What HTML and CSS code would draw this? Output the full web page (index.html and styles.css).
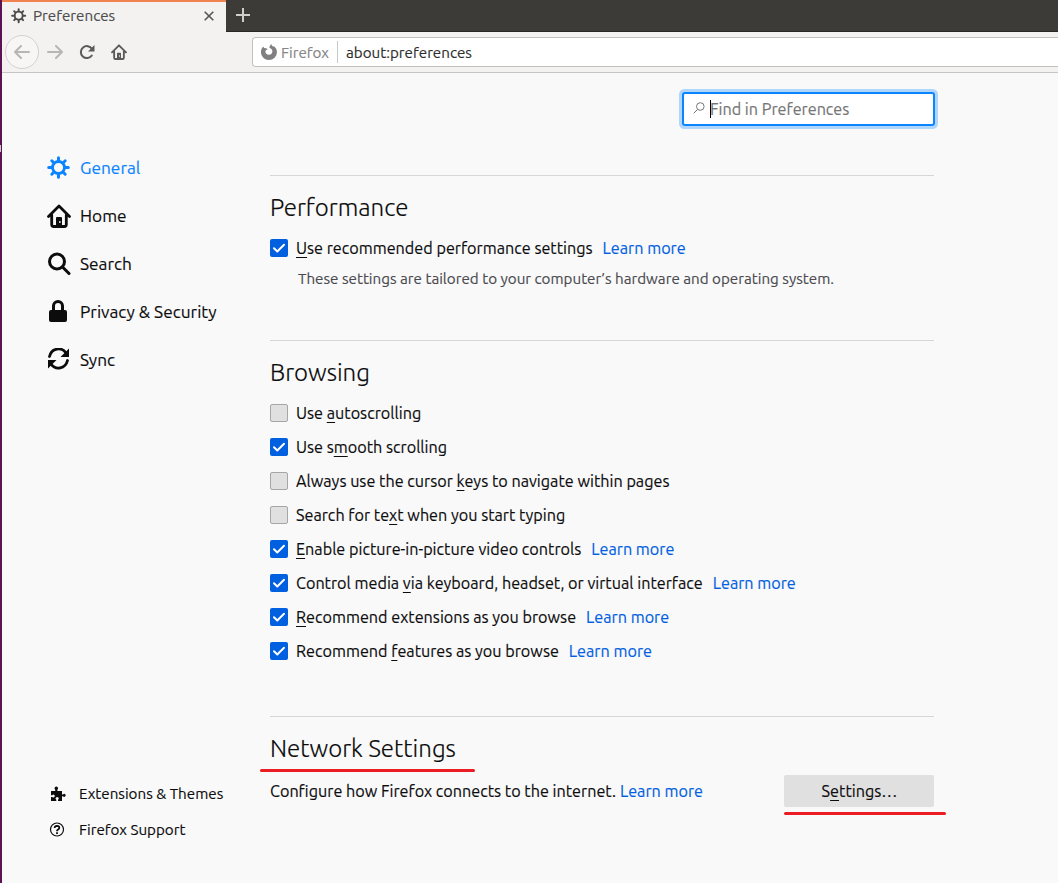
FILE: index.html
```html
<!DOCTYPE html>
<html lang="en">
<head>
<meta charset="utf-8">
<title>Preferences</title>
<link rel="stylesheet" href="styles.css">
</head>
<body>
<svg class="defs" width="0" height="0">
  <symbol id="gear" viewBox="0 0 24 24"><g fill="none" stroke="currentColor" stroke-linecap="round"><circle cx="11.500" cy="11.500" r="6" stroke-width="2.800"/><path stroke-width="3" d="M11.500 5V1.700M11.500 18v3.300M5 11.500H1.700M18 11.500h3.300M6.500 6.500 4.800 4.800M16.500 6.500l1.700-1.700M6.500 16.500l-1.700 1.700M16.500 16.500l1.700 1.700"/></g></symbol>
  <symbol id="home" viewBox="0 0 24 24"><path fill="none" stroke="currentColor" stroke-width="2.8" stroke-linecap="round" stroke-linejoin="round" d="M1.500 12.500 12 2l10.500 10.500M4.700 11v9.500a2 2 0 0 0 2 2h10.600a2 2 0 0 0 2-2V11"/><path fill="currentColor" fill-rule="evenodd" d="M9 22v-8q0-1 1-1h4q1 0 1 1v8zM12.200 17v2h1.300v-2z"/></symbol>
  <symbol id="check" viewBox="0 0 18 18"><path fill="none" stroke="#fff" stroke-width="2" stroke-linecap="round" stroke-linejoin="round" d="m4 9.300 3.300 3.200L14 5.800"/></symbol>
</svg>
<div class="window">
  <header class="tabs">
    <div class="tab">
      <svg class="tab-gear"><use href="#gear"/></svg>
      <span class="tab-title">Preferences</span>
      <svg class="tab-close" viewBox="0 0 10 10"><path d="m.7.7 8.600 8.600M9.300.7.7 9.300"/></svg>
    </div>
    <svg class="new-tab" viewBox="0 0 14 14"><path d="M7 0v14M0 7h14"/></svg>
  </header>
  <nav class="toolbar">
    <span class="back"><svg class="arrow" viewBox="0 0 16 14"><path d="M15 7H1M7 1 1 7l6 6"/></svg></span>
    <svg class="arrow forward" viewBox="0 0 16 14"><path d="M1 7h14M9 1l6 6-6 6"/></svg>
    <svg class="reload" viewBox="0 0 16 16"><path fill="none" stroke="currentColor" stroke-width="2" stroke-linecap="round" d="M12.800 11.500A6 6 0 1 1 13 5"/><path fill="currentColor" d="M15.500 1v6.500H9z"/></svg>
    <svg class="toolbar-home"><use href="#home"/></svg>
    <div class="urlbar">
      <svg class="firefox" viewBox="0 0 16 16"><path d="M8 16A8 8 0 0 1 1.200 3.800L2.400 2.400l.6 1.600 2.200.2 1.500 1.100-1.800.9q-1 1.600.1 3.200 1.300 1.700 3.500 1.400 2.500-.5 2.900-3.100.1-1.600-1.200-2.900L8.600 4.100Q8 2.400 10.200 0q.3 1.700 2 2.800l.7-.9q3.100 2.500 3.100 6.200A8 8 0 0 1 8 16z"/></svg>
      <span class="identity">Firefox</span>
      <span class="url">about:preferences</span>
    </div>
  </nav>
  <div class="page">
    <aside class="sidebar">
      <ul class="categories">
        <li class="category selected"><svg class="icon"><use href="#gear"/></svg><span>General</span></li>
        <li class="category"><svg class="icon"><use href="#home"/></svg><span>Home</span></li>
        <li class="category"><svg class="icon" viewBox="0 0 24 24"><g fill="none" stroke="currentColor" stroke-width="3" stroke-linecap="round"><circle cx="10" cy="9.500" r="7.500"/><path d="m15.500 15 6.500 6.500"/></g></svg><span>Search</span></li>
        <li class="category"><svg class="icon" viewBox="0 0 24 24"><rect x="2" y="10" width="18" height="12" rx="2" fill="currentColor"/><path fill="none" stroke="currentColor" stroke-width="3" d="M6.500 11V6a4.500 4.500 0 0 1 9 0V11"/></svg><span>Privacy &amp; Security</span></li>
        <li class="category"><svg class="icon" viewBox="0 0 24 24"><path fill="none" stroke="currentColor" stroke-width="2.800" stroke-linecap="round" d="M2.500 8.500C4.500 0 14.500-1.500 19 5M20.500 12.500c-2 8.500-12 10-16.500 3.500"/><path fill="currentColor" d="M22 .5V9h-8.500zM1 20.500V12h8.500z"/></svg><span>Sync</span></li>
      </ul>
      <ul class="footer-links">
        <li class="footer-link"><svg class="small-icon" viewBox="0 0 16 16"><path fill="currentColor" d="M1 5h4.200V3.600Q4.500 3 4.500 2.200 4.800.7 6.300.6q1.600.1 1.800 1.600 0 .8-.7 1.400V5H12v3.500h1q.5-.7 1.300-.7 1.300.2 1.400 1.500-.1 1.400-1.400 1.600-.8 0-1.300-.7h-1V15H8v-1.300q.8-.5.8-1.400Q8.600 11 7.200 10.900 5.700 11 5.500 12.300q0 .9.800 1.400V15H1v-4h1.300q.5.600 1.200.6 1.200-.2 1.300-1.500Q4.700 8.600 3.500 8.500q-.7 0-1.200.7H1z"/></svg><span>Extensions &amp; Themes</span></li>
        <li class="footer-link"><svg class="small-icon" viewBox="0 0 16 16"><g fill="none" stroke="currentColor"><circle cx="8" cy="7.500" r="6.500" stroke-width="1.200"/><path stroke-width="1.800" d="M5.600 6Q5.700 4 8 3.900q2.300.1 2.300 1.900 0 1-1.200 1.700Q8 8.100 8 9.300M8 10.300v1.700"/></g></svg><span>Firefox Support</span></li>
      </ul>
    </aside>
    <main class="content">
      <div class="search">
        <svg class="search-icon" viewBox="0 0 12 12"><circle cx="7.300" cy="4.500" r="3.800"/><path d="M4.500 7.500.7 11.300"/></svg>
        <span class="caret"></span><span class="placeholder">Find in Preferences</span>
      </div>
      <section class="group performance">
        <h2>Performance</h2>
        <div class="row"><svg class="box on"><use href="#check"/></svg><span><u>U</u>se recommended performance settings</span><a class="more">Learn more</a></div>
        <p class="hint">These settings are tailored to your computer’s hardware and operating system.</p>
      </section>
      <section class="group browsing">
        <h2>Browsing</h2>
        <div class="row"><span class="box"></span><span>Use <u>a</u>utoscrolling</span></div>
        <div class="row"><svg class="box on"><use href="#check"/></svg><span>Use s<u>m</u>ooth scrolling</span></div>
        <div class="row"><span class="box"></span><span>Always use the cursor <u>k</u>eys to navigate within pages</span></div>
        <div class="row"><span class="box"></span><span>Search for te<u>x</u>t when you start typing</span></div>
        <div class="row"><svg class="box on"><use href="#check"/></svg><span><u>E</u>nable picture-in-picture video controls</span><a class="more">Learn more</a></div>
        <div class="row"><svg class="box on"><use href="#check"/></svg><span>Control media <u>v</u>ia keyboard, headset, or virtual interface</span><a class="more">Learn more</a></div>
        <div class="row"><svg class="box on"><use href="#check"/></svg><span><u>R</u>ecommend extensions as you browse</span><a class="more">Learn more</a></div>
        <div class="row"><svg class="box on"><use href="#check"/></svg><span>Recommend <u>f</u>eatures as you browse</span><a class="more">Learn more</a></div>
      </section>
      <section class="group network">
        <h2>Network Settings<span class="mark mark-heading"></span></h2>
        <div class="row"><span>Configure how Firefox connects to the internet.</span><a class="more">Learn more</a>
          <span class="button"><span>S<u>e</u>ttings…</span><span class="mark mark-button"></span></span></div>
      </section>
    </main>
  </div>
</div>
</body>
</html>
```
FILE: styles.css
```css
* { box-sizing: border-box; }
body { margin: 0; overflow: hidden; background: #f9f9fa; color: #0c0c0d; font: 16.2px/24px Ubuntu, "Noto Sans", sans-serif; white-space: nowrap; -webkit-text-stroke: .15px; }
ul, h2, p { margin: 0; padding: 0; list-style: none; }
svg { display: block; flex: none; }
.defs { position: absolute; }
.window { position: relative; height: 883px; border-left: 2px solid #5c1252; display: flex; flex-direction: column; }
.window::before { content: ""; position: absolute; left: -2px; top: 145px; width: 1px; height: 7px; background: #ccc; }

.tabs { height: 32px; background: #3c3b37; border-bottom: 1px solid #282725; display: flex; align-items: flex-start; }
.tab { width: 224px; height: 32px; background: #f3f2f1; border-top: 2px solid #f0824f; display: flex; align-items: center; padding: 0 12px 2px 9px; color: #4c4c4c; font-size: 15.2px; }
.tab-gear { width: 16px; height: 16px; margin-right: 6px; }
.tab-title { flex: 1; }
.tab-close { width: 10px; height: 10px; stroke: #555; stroke-width: 1.6; }
.new-tab { width: 14px; height: 14px; margin: 8px 0 0 10px; stroke: #d0cfcb; stroke-width: 2; }

.toolbar { height: 41px; background: #f3f2f1; border-bottom: 1px solid #c8c6c4; display: flex; align-items: center; padding-left: 3px; color: #5a5a5a; }
.back { width: 34px; height: 34px; border: 1px solid #d3d2d0; border-radius: 50%; background: #f7f6f5; display: flex; align-items: center; justify-content: center; }
.arrow { width: 16px; height: 14px; fill: none; stroke: #b7b6b5; stroke-width: 2; stroke-linecap: round; stroke-linejoin: round; }
.forward { margin-left: 8px; }
.reload { width: 16px; height: 16px; margin-left: 16px; }
.toolbar-home { width: 16px; height: 16px; margin-left: 16px; }
.urlbar { flex: 1; height: 30px; margin-left: 125px; border: 1px solid #c5c2be; border-right: 0; border-radius: 4px 0 0 4px; background: #fff; display: flex; align-items: center; padding-left: 8px; font-size: 15.2px; }
.firefox { width: 16px; height: 16px; fill: #808080; margin-right: 4px; }
.identity { width: 57px; height: 22px; line-height: 23px; border-right: 1px solid #c8c8c8; color: #858585; margin-right: 8px; }
.url { padding-top: 1px; color: #2e2e2e; }

.page { flex: 1; display: flex; }
.sidebar { width: 268px; padding: 71px 0 35px 45px; display: flex; flex-direction: column; justify-content: space-between; }
.category { height: 48px; display: flex; align-items: center; gap: 9px; font-size: 17.3px; }
.category.selected { color: #0a84ff; }
.icon { width: 24px; height: 24px; }
.footer-link { height: 36px; display: flex; align-items: center; font-size: 15.2px; gap: 13px; padding-left: 3px; }
.footer-link:last-child { gap: 14px; padding-left: 2px; }
.small-icon { width: 16px; height: 16px; }

.content { width: 664px; padding-top: 20px; }
.search { width: 251px; height: 32px; margin-left: auto; border-radius: 2px; background: #fff; border: 1px solid #0a84ff; box-shadow: 0 0 0 1px #0a84ff, 0 0 0 4px #0a84ff4d; display: flex; align-items: center; padding-left: 9px; color: #757575; }
.search-icon { width: 12px; height: 12px; fill: none; stroke: #777; margin-bottom: 2px; }
.caret { width: 1px; height: 18px; background: #000; margin: 0 -1px 0 5px; }
.group { border-top: 1px solid #d7d7db; padding-top: 14px; }
.performance { margin-top: 50px; height: 165px; }
.browsing { height: 376px; }
h2 { position: relative; width: max-content; font-size: 24.1px; font-weight: 300; line-height: 36px; margin-bottom: 5px; }
.network h2 { margin-bottom: 7px; }
.row { height: 34px; display: flex; align-items: center; }
.box { width: 18px; height: 18px; flex: none; border: 1px solid #a6a6a8; border-radius: 2px; background: #e0e0e1; margin-right: 8px; }
.box.on { border: 0; background: #0060df; }
u { text-decoration-thickness: 1px; text-underline-offset: 3px; }
.more { color: #0060df; margin-left: 10px; }
.network .more { margin-left: 4px; }
.hint { font-size: 15.2px; line-height: 24px; margin: 2px 0 0 28px; color: #4a4a4f; }
.button { position: relative; width: 150px; height: 32px; margin-left: auto; border-radius: 2px; background: #e0e0e1; display: flex; align-items: center; justify-content: center; padding-left: 1px; }
.mark { position: absolute; height: 3px; border-radius: 2px; background: #ec1c24; }
.mark-heading { left: -10px; top: 38px; width: 215px; }
.mark-button { left: 0; top: 37px; width: 162px; }
```
